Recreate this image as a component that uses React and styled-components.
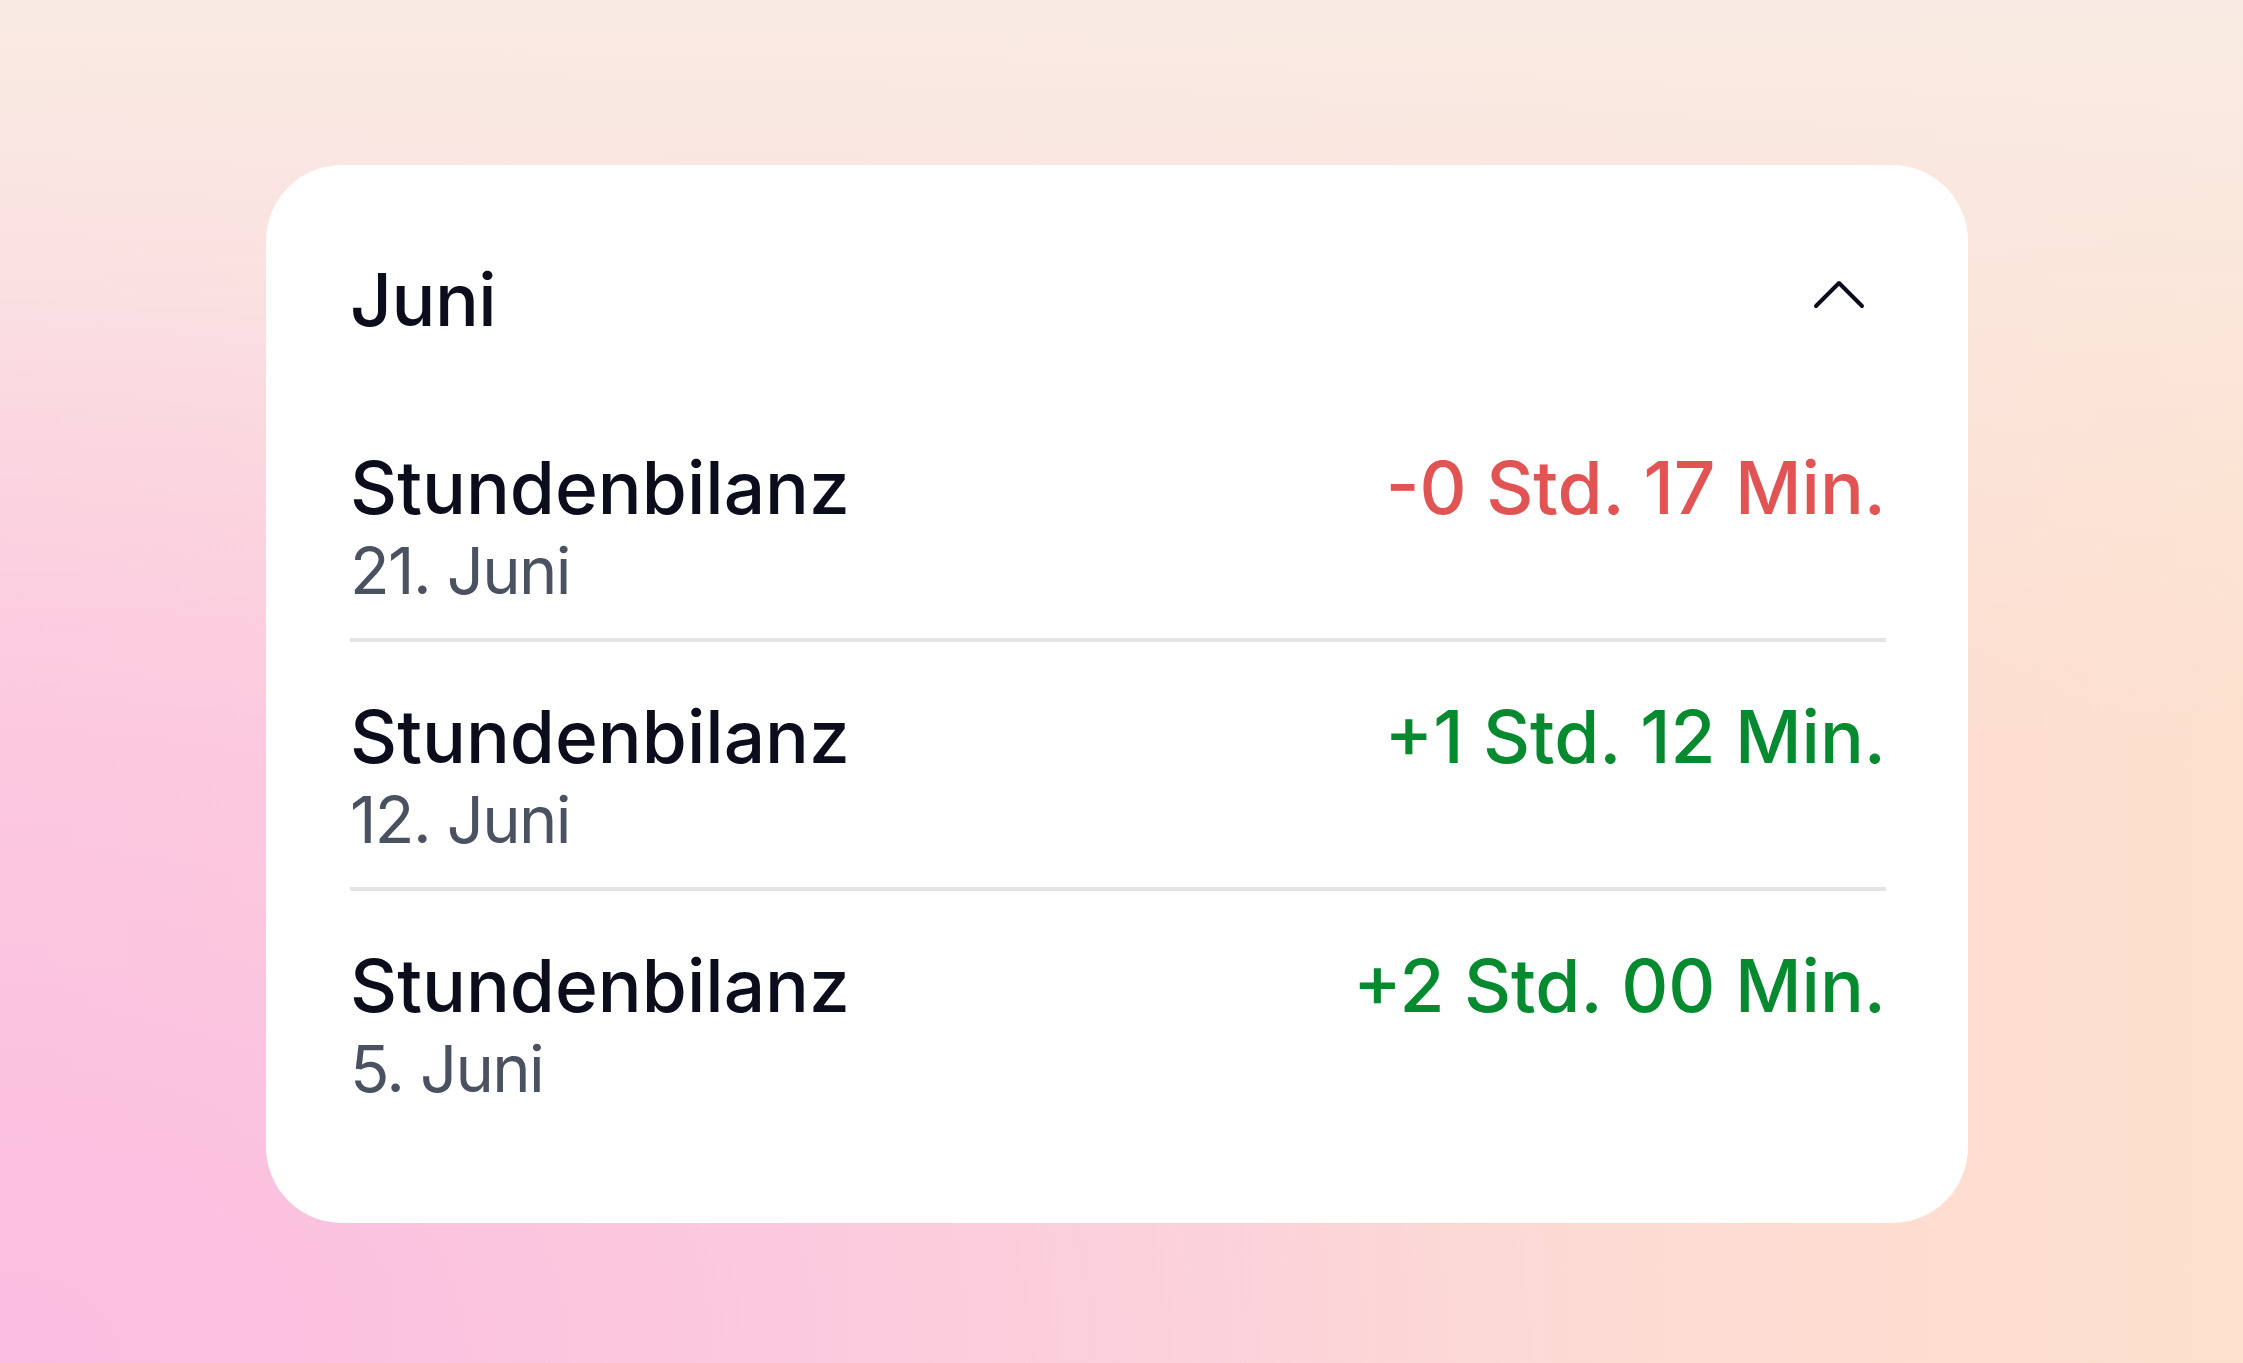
import React from "react";
import styled, { createGlobalStyle } from "styled-components";

const GlobalStyle = createGlobalStyle`
  html, body {
    margin: 0;
    padding: 0;
  }
  body {
    font-family: Inter, "Noto Sans", sans-serif;
    min-height: 100vh;
    background:
      radial-gradient(ellipse 70% 80% at 0% 100%, #fbbde0 0%, rgba(251, 189, 224, 0) 100%),
      linear-gradient(180deg, #f9ebe3 0%, rgba(249, 235, 227, 0) 55%),
      linear-gradient(90deg, #fcd0df 0%, #fcd7d9 50%, #fde0cd 100%);
  }
`;

const Page = styled.div`
  display: flex;
  align-items: flex-start;
  padding: 165px 0 0 266px;
  min-height: 100vh;
  box-sizing: border-box;
`;

const Card = styled.section`
  width: 1702px;
  box-sizing: border-box;
  padding: 91px 82px 87px 84px;
  background: #ffffff;
  border-radius: 76px;
`;

const Header = styled.header`
  display: flex;
  justify-content: space-between;
  align-items: flex-start;
  margin-bottom: 49px;
`;

const Month = styled.h2`
  margin: 0;
  font-size: 73px;
  line-height: 88px;
  font-weight: 500;
  letter-spacing: -0.5px;
  color: #0b0d1c;
`;

const Toggle = styled.button`
  display: flex;
  border: 0;
  padding: 0;
  margin: 24px 20px 0 0;
  background: none;
  color: #0b0d1c;
  cursor: pointer;
`;

const Row = styled.div`
  display: flex;
  justify-content: space-between;
  align-items: flex-start;
  padding: 51px 0 28px;
  border-bottom: ${(p) => (p.last ? "none" : "4px solid #e4e4e4")};
`;

const Info = styled.div`
  display: flex;
  flex-direction: column;
`;

const Title = styled.span`
  font-size: 73px;
  line-height: 88px;
  font-weight: 500;
  color: #0b0d1c;
`;

const DateText = styled.span`
  font-size: 65px;
  line-height: 78px;
  font-weight: 400;
  letter-spacing: -1.6px;
  color: #4a5262;
`;

const Balance = styled.span`
  font-size: 73px;
  line-height: 88px;
  font-weight: 500;
  color: ${(p) => (p.negative ? "#e25454" : "#068a30")};
`;

const ChevronUp = () => (
  <svg width="54" height="30" viewBox="0 0 54 30" fill="none">
    <polyline
      points="4,26 27,3 50,26"
      stroke="currentColor"
      strokeWidth="4"
      strokeLinecap="round"
      strokeLinejoin="round"
    />
  </svg>
);

const entries = [
  { date: "21. Juni", value: "-0 Std. 17 Min.", negative: true },
  { date: "12. Juni", value: "+1 Std. 12 Min." },
  { date: "5. Juni", value: "+2 Std. 00 Min." },
];

export default function App() {
  return (
    <>
      <GlobalStyle />
      <Page>
        <Card>
          <Header>
            <Month>Juni</Month>
            <Toggle aria-label="Einklappen">
              <ChevronUp />
            </Toggle>
          </Header>
          {entries.map((e, i) => (
            <Row key={e.date} last={i === entries.length - 1}>
              <Info>
                <Title>Stundenbilanz</Title>
                <DateText>{e.date}</DateText>
              </Info>
              <Balance negative={e.negative}>{e.value}</Balance>
            </Row>
          ))}
        </Card>
      </Page>
    </>
  );
}
